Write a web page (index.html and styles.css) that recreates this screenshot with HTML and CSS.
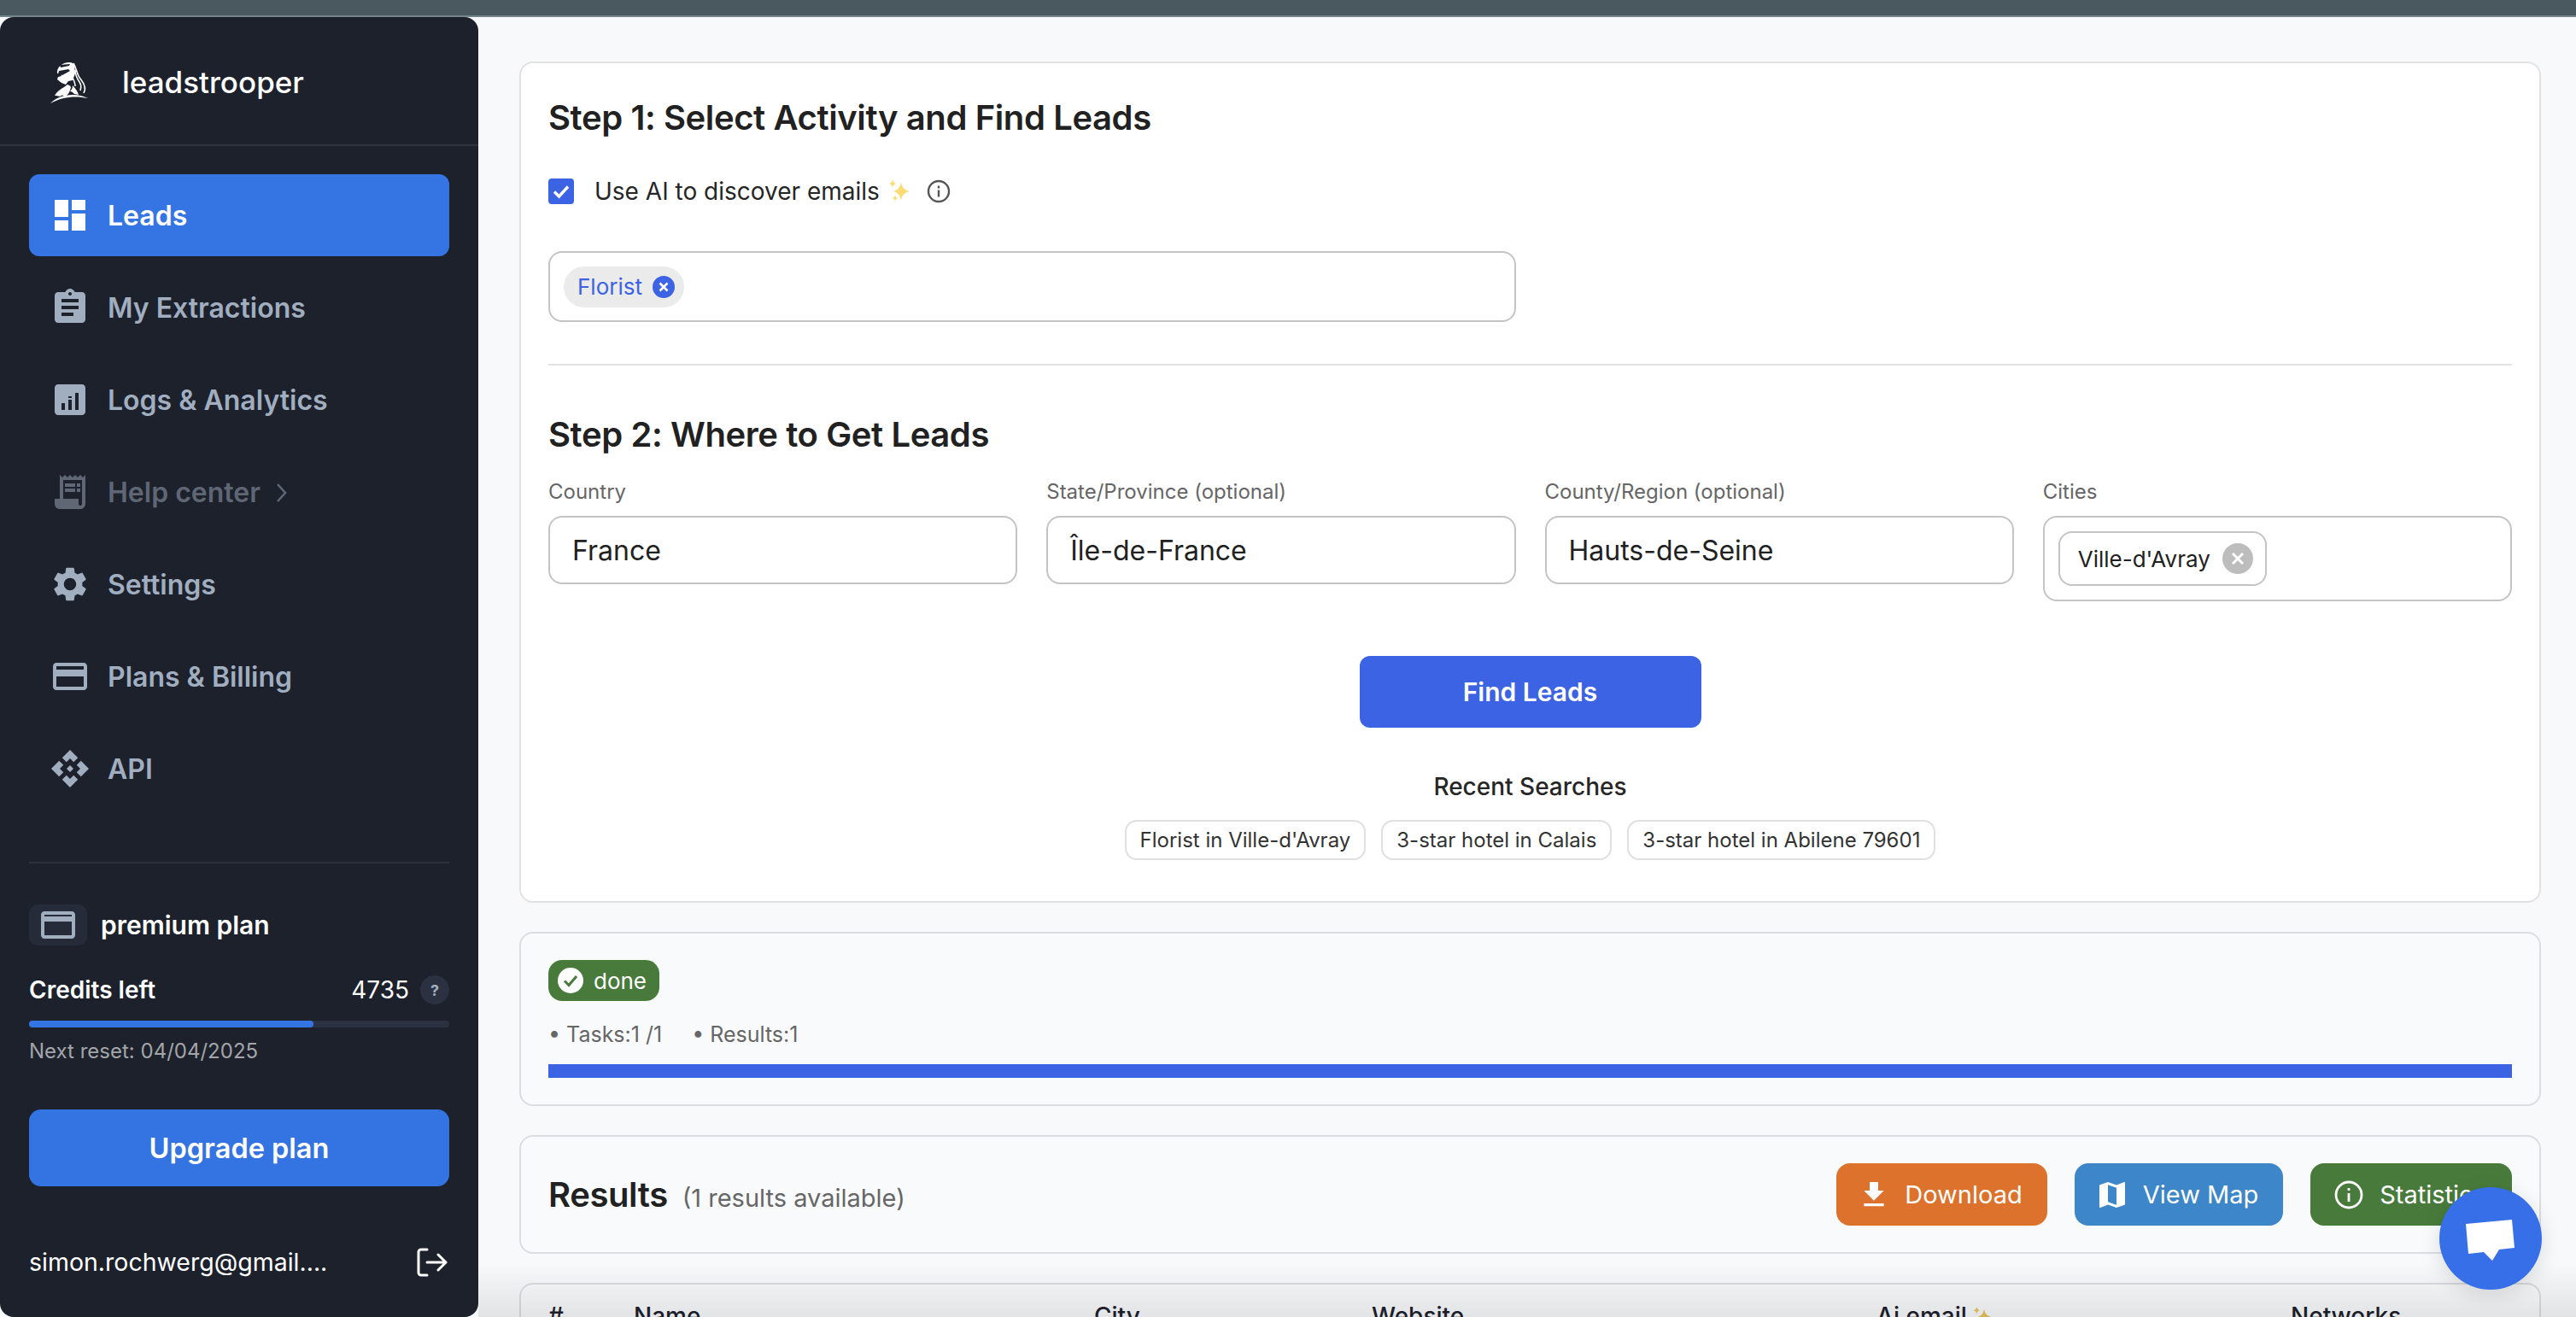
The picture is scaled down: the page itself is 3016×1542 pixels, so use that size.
FILE: index.html
```html
<!DOCTYPE html>
<html lang="en">
<head>
  <meta charset="UTF-8" />
  <title>leadstrooper</title>
  <link rel="stylesheet" href="styles.css">
</head>
<body>
  <div class="topbar"></div>

  <div class="app">
    <aside class="sidebar">
      <div class="brand">
        <svg class="logo" viewBox="0 0 60 70" width="60" height="70">
          <path fill="#fff" d="M17 24c-1-7 6-13 14-13 3 0 5 1 6 3l1 10-3 8-5 1-3 4-5-2-5-4 1-3 4-1-1-2z"/>
          <path fill="#1c212c" d="M19 21l11-2 2 2-9 5-5-1zM20 14l12-1-1 2-10 2z"/>
          <path fill="none" stroke="#fff" stroke-width="1.6" d="M36 12c3 5 4 11 6 15s6 7 7 12c1 3 0 6-1 8M38 20c0 6 3 11 5 14s2 7 1 10M35 29c2 4 3 6 3 10"/>
          <path fill="#fff" d="M14 50c3-6 10-9 15-13 2 1 3 1 4 3-1 5-3 9-7 11-2-2-4-2-6 0-2-1-4-1-6-1zM35 38c3 3 6 7 7 11l-5-1c-2-2-3-3-5-3 2-2 3-4 3-7z"/>
          <path fill="#fff" d="M9 59c8-9 28-14 44-6-14-3-30-2-44 6z"/>
        </svg>
        <span class="brand-name">leadstrooper</span>
      </div>

      <nav class="nav">
        <a class="nav-item active">
          <svg viewBox="0 0 24 24"><path d="M3 13h8V3H3v10zm0 8h8v-6H3v6zm10 0h8V11h-8v10zm0-18v6h8V3h-8z"/></svg>
          Leads
        </a>
        <a class="nav-item">
          <svg viewBox="0 0 24 24"><path d="M19 3h-4.18C14.4 1.84 13.3 1 12 1c-1.3 0-2.4.84-2.82 2H5c-1.1 0-2 .9-2 2v14c0 1.1.9 2 2 2h14c1.1 0 2-.9 2-2V5c0-1.1-.9-2-2-2zm-7 0c.55 0 1 .45 1 1s-.45 1-1 1-1-.45-1-1 .45-1 1-1zm2 14H7v-2h7v2zm3-4H7v-2h10v2zm0-4H7V7h10v2z"/></svg>
          My Extractions
        </a>
        <a class="nav-item">
          <svg viewBox="0 0 24 24"><path d="M19 3H5c-1.1 0-2 .9-2 2v14c0 1.1.9 2 2 2h14c1.1 0 2-.9 2-2V5c0-1.1-.9-2-2-2zM9 18H7v-4h2v4zm4 0h-2v-6h2v6zm0-7h-2v-1h2v1zm4 7h-2V8h2v10z"/></svg>
          Logs &amp; Analytics
        </a>
        <a class="nav-item muted">
          <svg viewBox="0 0 24 24"><path d="M19.5 3.5 18 2l-1.5 1.5L15 2l-1.5 1.5L12 2l-1.5 1.5L9 2 7.5 3.5 6 2v14H3v3c0 1.66 1.34 3 3 3h12c1.66 0 3-1.34 3-3V2l-1.5 1.5zM19 19c0 .55-.45 1-1 1s-1-.45-1-1v-3H8V5h11v14z"/><path d="M9 7h6v2H9zm7 0h2v2h-2zm-7 3h6v2H9zm7 0h2v2h-2z"/></svg>
          Help center
          <svg class="chevron" viewBox="0 0 14 24"><path d="M2 2l9 10-9 10" fill="none" stroke="currentColor" stroke-width="2.6"/></svg>
        </a>
        <a class="nav-item">
          <svg viewBox="0 0 24 24"><path d="M19.14 12.94c.04-.3.06-.61.06-.94 0-.32-.02-.64-.07-.94l2.03-1.58c.18-.14.23-.41.12-.61l-1.92-3.32c-.12-.22-.37-.29-.59-.22l-2.39.96c-.5-.38-1.03-.7-1.62-.94l-.36-2.54c-.04-.24-.24-.41-.48-.41h-3.84c-.24 0-.43.17-.47.41l-.36 2.54c-.59.24-1.13.57-1.62.94l-2.39-.96c-.22-.08-.47 0-.59.22L2.74 8.87c-.12.21-.08.47.12.61l2.03 1.58c-.05.3-.09.63-.09.94s.02.64.07.94l-2.03 1.58c-.18.14-.23.41-.12.61l1.92 3.32c.12.22.37.29.59.22l2.39-.96c.5.38 1.03.7 1.62.94l.36 2.54c.05.24.24.41.48.41h3.84c.24 0 .44-.17.47-.41l.36-2.54c.59-.24 1.13-.56 1.62-.94l2.39.96c.22.08.47 0 .59-.22l1.92-3.32c.12-.22.07-.47-.12-.61l-2.01-1.58zM12 15.6c-1.98 0-3.6-1.62-3.6-3.6s1.62-3.6 3.6-3.6 3.6 1.62 3.6 3.6-1.62 3.6-3.6 3.6z"/></svg>
          Settings
        </a>
        <a class="nav-item">
          <svg viewBox="0 0 24 24"><path d="M20 4H4c-1.11 0-1.99.89-1.99 2L2 18c0 1.11.89 2 2 2h16c1.11 0 2-.89 2-2V6c0-1.11-.89-2-2-2zm0 14H4v-6h16v6zm0-10H4V6h16v2z"/></svg>
          Plans &amp; Billing
        </a>
        <a class="nav-item">
          <svg viewBox="0 0 24 24"><path d="M14 12l-2 2-2-2 2-2 2 2zm-2-6l2.12 2.12 2.5-2.5L12 1 7.38 5.62l2.5 2.5L12 6zm-6 6l2.12-2.12-2.5-2.5L1 12l4.62 4.62 2.5-2.5L6 12zm12 0l-2.12 2.12 2.5 2.5L23 12l-4.62-4.62-2.5 2.5L18 12zm-6 6l-2.12-2.12-2.5 2.5L12 23l4.62-4.62-2.5-2.5L12 18z"/></svg>
          API
        </a>
      </nav>

      <div class="side-bottom">
        <div class="plan">
          <span class="plan-icon">
            <svg viewBox="0 0 24 24"><path d="M20 4H4c-1.11 0-1.99.89-1.99 2L2 18c0 1.11.89 2 2 2h16c1.11 0 2-.89 2-2V6c0-1.11-.89-2-2-2zm0 14H4v-8h16v8zm0-11H4V6h16v1z"/></svg>
          </span>
          premium plan
        </div>
        <div class="credits">
          <span class="credits-label">Credits left</span>
          <span class="credits-num">4735</span>
          <span class="help-dot">?</span>
        </div>
        <div class="credit-bar"><div class="credit-fill" style="width: 67.7%"></div></div>
        <div class="reset">Next reset: 04/04/2025</div>
        <button class="upgrade">Upgrade plan</button>
        <div class="account">
          <span>simon.rochwerg@gmail....</span>
          <svg viewBox="0 0 36 34" width="36" height="34" fill="none" stroke="#fff" stroke-width="3" stroke-linecap="round" stroke-linejoin="round"><path d="M12 2H5a3 3 0 0 0-3 3v24a3 3 0 0 0 3 3h7M12 17h22M25 8l9 9-9 9"/></svg>
        </div>
      </div>
    </aside>

    <main class="main">
      <section class="card search-card">
        <h2>Step 1: Select Activity and Find Leads</h2>
        <div class="ai-row">
          <span class="checkbox">
            <svg viewBox="0 0 30 30" width="30" height="30"><path d="M7 15.5l5.5 5.5L23 9.5" fill="none" stroke="#fff" stroke-width="3.4"/></svg>
          </span>
          <span>Use AI to discover emails</span>
          <svg class="sparkle" viewBox="0 0 30 30" width="30" height="30" fill="#fbdb72"><path d="M15 4c1 6 3 9 10 11-7 2-9 5-10 11-1-6-3-9-9-11 6-2 8-5 9-11z"/><path d="M5 1c.5 3 1.500 4 4 5-2.500 1-3.500 2-4 5-.5-3-1.500-4-4-5 2.500-1 3.500-2 4-5z"/><path d="M8 19c.4 2.500 1 3.300 3.500 4-2.500.7-3.100 1.500-3.500 4-.4-2.500-1-3.300-3.500-4 2.500-.7 3.100-1.500 3.500-4z"/></svg>
          <svg class="info" viewBox="0 0 28 28" width="28" height="28" fill="none" stroke="#555" stroke-width="2.4"><circle cx="14" cy="14" r="12"/><path d="M14 12.500v8"/><path d="M14 7.500v3"/></svg>
        </div>

        <div class="activity-box">
          <span class="tag">Florist
            <svg viewBox="0 0 26 26" width="26" height="26"><circle cx="13" cy="13" r="13" fill="#3b63e4"/><path d="M8.500 8.500l9 9M17.500 8.500l-9 9" stroke="#fff" stroke-width="2.600"/></svg>
          </span>
        </div>

        <hr class="divider">

        <h2 class="step2">Step 2: Where to Get Leads</h2>
        <div class="fields">
          <div>
            <div class="field-label">Country</div>
            <div class="field-box">France</div>
          </div>
          <div>
            <div class="field-label">State/Province (optional)</div>
            <div class="field-box">Île-de-France</div>
          </div>
          <div>
            <div class="field-label">County/Region (optional)</div>
            <div class="field-box">Hauts-de-Seine</div>
          </div>
          <div>
            <div class="field-label">Cities</div>
            <div class="field-box cities">
              <span class="city-chip">Ville-d'Avray
                <svg viewBox="0 0 36 36" width="36" height="36"><circle cx="18" cy="18" r="18" fill="#bdbdbd"/><path d="M12 12l12 12M24 12L12 24" stroke="#fff" stroke-width="3"/></svg>
              </span>
            </div>
          </div>
        </div>

        <button class="find-btn">Find Leads</button>

        <div class="recent-title">Recent Searches</div>
        <div class="recent-list">
          <span class="recent-chip">Florist in Ville-d'Avray</span>
          <span class="recent-chip">3-star hotel in Calais</span>
          <span class="recent-chip">3-star hotel in Abilene 79601</span>
        </div>
      </section>

      <section class="card flat status-card">
        <span class="badge">
          <svg viewBox="0 0 30 30" width="30" height="30"><circle cx="15" cy="15" r="15" fill="#fff"/><path d="M8 15.500l5 5 9-10.500" fill="none" stroke="#487b3b" stroke-width="3"/></svg>
          done
        </span>
        <div class="stats">
          <span>• Tasks:1 /1</span>
          <span>• Results:1</span>
        </div>
        <div class="progress"></div>
      </section>

      <section class="card flat results-card">
        <div class="results-title">
          <strong>Results</strong>
          <span>(1 results available)</span>
        </div>
        <div class="actions">
          <button class="action orange">
            <svg viewBox="0 0 24 24" width="40" height="40"><path d="M5 20h14v-2H5v2zM19 9h-4V3H9v6H5l7 7 7-7z"/></svg>
            Download
          </button>
          <button class="action blue">
            <svg viewBox="0 0 24 24" width="40" height="40"><path d="M20.500 3l-.16.03L15 5.100 9 3 3.360 4.900c-.21.07-.36.25-.36.48V20.500c0 .28.22.5.5.5l.16-.03L9 18.900l6 2.100 5.640-1.900c.21-.07.36-.25.36-.48V3.500c0-.28-.22-.5-.5-.5zM15 19l-6-2.100V5l6 2.100V19z"/></svg>
            View Map
          </button>
          <button class="action green">
            <svg viewBox="0 0 34 34" width="34" height="34" fill="none" stroke="#fff" stroke-width="2.800"><circle cx="17" cy="17" r="15"/><path d="M17 15v10M17 9v3"/></svg>
            Statistics
          </button>
        </div>
      </section>

      <section class="card flat table-card">
        <table class="results-table">
          <thead>
            <tr>
              <th class="col-num">#</th>
              <th class="col-name">Name</th>
              <th class="col-city">City</th>
              <th class="col-web">Website</th>
              <th class="col-mail">Ai email
                <svg class="mail-sparkle" viewBox="0 0 30 30" width="26" height="26" fill="#e8c35a"><path d="M15 4c1 6 3 9 10 11-7 2-9 5-10 11-1-6-3-9-9-11 6-2 8-5 9-11z"/><path d="M5 1c.5 3 1.500 4 4 5-2.500 1-3.500 2-4 5-.5-3-1.500-4-4-5 2.500-1 3.500-2 4-5z"/></svg>
              </th>
              <th>Networks</th>
            </tr>
          </thead>
        </table>
      </section>

      <div class="bottom-shade"></div>
      <button class="chat-btn">
        <svg viewBox="0 0 120 120" width="120" height="120"><path fill="#fff" d="M31 43l54-5 3 33-18 2-8 13-10-10-18 2z"/></svg>
      </button>
    </main>
  </div>
</body>
</html>
```

FILE: styles.css
```css
* {
  box-sizing: border-box;
}

html, body {
  height: 100%;
  margin: 0;
  overflow: hidden;
}

body {
  font-family: Inter, "Liberation Sans", sans-serif;
  background: #f8f9fb;
  color: #212121;
  display: flex;
  flex-direction: column;
}

svg {
  flex-shrink: 0;
}

button {
  font-family: inherit;
  border: none;
  cursor: pointer;
}

.topbar {
  height: 20px;
  flex-shrink: 0;
  background: #4a5860;
  border-bottom: 2px solid #76848b;
}

.app {
  flex: 1;
  display: flex;
  min-height: 0;
}

/* sidebar */
.sidebar {
  width: 560px;
  flex-shrink: 0;
  background: #1c212c;
  border-radius: 16px;
  display: flex;
  flex-direction: column;
  color: #fff;
}

.brand {
  height: 151px;
  flex-shrink: 0;
  border-bottom: 2px solid #2f343f;
  display: flex;
  align-items: center;
  padding-left: 50px;
  padding-top: 4px;
  gap: 33px;
}

.brand-name {
  font-size: 35px;
  font-weight: 500;
  padding-bottom: 2px;
}

.nav {
  padding: 33px 34px 0;
  display: flex;
  flex-direction: column;
  gap: 12px;
}

.nav-item {
  height: 96px;
  border-radius: 12px;
  padding-left: 24px;
  display: flex;
  align-items: center;
  font-size: 32px;
  font-weight: 600;
  color: #a0aec0;
}

.nav-item svg {
  width: 48px;
  height: 48px;
  margin-right: 20px;
  fill: currentColor;
}

.nav-item svg.chevron {
  width: 14px;
  height: 24px;
  margin: 2px 0 0 18px;
  fill: none;
}

.nav-item.active {
  background: #3574e3;
  color: #fff;
}

.nav-item.muted {
  color: #5f6674;
}

.side-bottom {
  margin: 61px 34px 0;
  border-top: 2px solid #2a303c;
  padding-top: 48px;
}

.plan {
  display: flex;
  align-items: center;
  gap: 16px;
  font-size: 30px;
  font-weight: 600;
}

.plan-icon {
  width: 68px;
  height: 48px;
  border-radius: 10px;
  background: #252b38;
  display: flex;
  align-items: center;
  justify-content: center;
}

.plan-icon svg {
  width: 54px;
  height: 48px;
  fill: #a0aec0;
}

.credits {
  display: flex;
  align-items: center;
  margin-top: 34px;
  height: 36px;
  font-size: 28px;
}

.credits-label {
  font-weight: 600;
  flex: 1;
}

.help-dot {
  width: 34px;
  height: 34px;
  margin-left: 13px;
  border-radius: 50%;
  background: #2b3140;
  color: #a0aec0;
  font-size: 18px;
  font-weight: 700;
  display: flex;
  align-items: center;
  justify-content: center;
}

.credit-bar {
  height: 8px;
  margin-top: 18px;
  border-radius: 4px;
  background: #2b3140;
}

.credit-fill {
  height: 100%;
  border-radius: 4px;
  background: #3574e3;
}

.reset {
  margin-top: 12px;
  font-size: 24px;
  line-height: 32px;
  color: #a3a5a9;
}

.upgrade {
  display: block;
  width: 100%;
  height: 90px;
  margin-top: 52px;
  border-radius: 14px;
  background: #3474e2;
  color: #fff;
  font-size: 32.5px;
  font-weight: 600;
}

.account {
  display: flex;
  align-items: center;
  justify-content: space-between;
  margin-top: 71px;
  font-size: 28.5px;
  padding-right: 2px;
}

/* main column */
.main {
  flex: 1;
  min-width: 0;
  position: relative;
  overflow: hidden;
  padding: 52px 41px 0 48px;
  display: flex;
  flex-direction: column;
  gap: 34px;
}

.card {
  flex-shrink: 0;
  background: #fff;
  border: 2px solid #e2e2e2;
  border-radius: 16px;
  padding: 0 32px;
}

.card.flat {
  background: #f9fafc;
  border-color: #dcdde0;
}

h2 {
  margin: 0;
  font-size: 40px;
  line-height: 48px;
  font-weight: 600;
  letter-spacing: -0.4px;
}

.search-card {
  padding-top: 40px;
  padding-bottom: 48px;
}

.ai-row {
  display: flex;
  align-items: center;
  height: 30px;
  margin-top: 47px;
  font-size: 28px;
  color: #262626;
}

.checkbox {
  width: 30px;
  height: 30px;
  border-radius: 4px;
  background: #3b63e4;
  margin-right: 24px;
}

.checkbox svg {
  display: block;
}

.sparkle {
  margin-left: 10px;
}

.info {
  margin-left: 15px;
}

.activity-box {
  width: 1133px;
  height: 83px;
  margin-top: 55px;
  border: 2px solid #c4c4c4;
  border-radius: 16px;
  padding-left: 16px;
  display: flex;
  align-items: center;
}

.tag {
  height: 48px;
  padding: 0 11px 0 16px;
  border-radius: 24px;
  background: #ebebeb;
  color: #3b63e4;
  font-size: 26px;
  display: flex;
  align-items: center;
  gap: 12px;
}

.divider {
  height: 2px;
  margin: 49px 0 0;
  border: none;
  background: #e2e2e2;
}

.step2 {
  margin-top: 57px;
}

.fields {
  display: grid;
  grid-template-columns: repeat(4, 1fr);
  gap: 34px;
  align-items: start;
  margin-top: 28px;
}

.field-label {
  font-size: 24px;
  line-height: 30px;
  color: #666;
  margin-bottom: 13px;
}

.field-box {
  height: 80px;
  border: 2px solid #c4c4c4;
  border-radius: 16px;
  padding-left: 26px;
  font-size: 32px;
  display: flex;
  align-items: center;
}

.field-box.cities {
  height: 100px;
  padding-left: 16px;
}

.city-chip {
  height: 64px;
  padding: 0 14px 0 21px;
  border: 2px solid #c4c4c4;
  border-radius: 16px;
  font-size: 26px;
  display: flex;
  align-items: center;
  gap: 14px;
}

.find-btn {
  display: block;
  width: 400px;
  height: 84px;
  margin: 64px auto 0;
  border-radius: 12px;
  background: #3b63e4;
  color: #fff;
  font-size: 30px;
  font-weight: 600;
}

.recent-title {
  margin-top: 49px;
  text-align: center;
  font-size: 28px;
  line-height: 40px;
  font-weight: 500;
  color: #262626;
}

.recent-list {
  display: flex;
  justify-content: center;
  gap: 18px;
  margin-top: 19px;
}

.recent-chip {
  height: 47px;
  padding: 0 16px;
  border: 2px solid #e0e0e0;
  border-radius: 14px;
  font-size: 24px;
  color: #333;
  display: flex;
  align-items: center;
}

.status-card {
  padding-top: 31px;
  padding-bottom: 31px;
}

.badge {
  width: 130px;
  height: 48px;
  border-radius: 16px;
  background: #487b3b;
  color: #fff;
  font-size: 26px;
  padding-left: 11px;
  display: flex;
  align-items: center;
  gap: 12px;
}

.stats {
  display: flex;
  gap: 35px;
  margin-top: 21px;
  font-size: 25px;
  line-height: 36px;
  color: #666;
}

.progress {
  height: 16px;
  margin-top: 17px;
  background: #3b63e4;
}

.results-card {
  height: 139px;
  display: flex;
  align-items: center;
  justify-content: space-between;
}

.results-title {
  display: flex;
  align-items: baseline;
  gap: 17px;
}

.results-title strong {
  font-size: 40px;
  font-weight: 600;
  letter-spacing: -0.4px;
}

.results-title span {
  font-size: 29px;
  color: #666;
}

.actions {
  display: flex;
  gap: 32px;
}

.action {
  height: 73px;
  border-radius: 16px;
  color: #fff;
  font-size: 29px;
  display: flex;
  align-items: center;
  gap: 16px;
  padding: 0 29px 0 24px;
}

.action svg {
  fill: #fff;
}

.action.green {
  gap: 19px;
  padding: 0 30px 0 28px;
}

.action.green svg {
  fill: none;
}

.orange {
  background: #dd722c;
}

.blue {
  background: #3c86c9;
}

.green {
  background: #487b3b;
}

.table-card {
  background: #f3f4f6;
  height: 80px;
  padding-top: 20px;
}

.results-table {
  width: 100%;
  border-collapse: collapse;
  table-layout: fixed;
}

.results-table th {
  padding: 0;
  text-align: left;
  font-size: 28px;
  font-weight: 500;
  color: #1c212c;
  white-space: nowrap;
}

.mail-sparkle {
  vertical-align: -4px;
}

.col-num {
  width: 100px;
}

.col-name {
  width: 539px;
}

.col-city {
  width: 325px;
}

.col-web {
  width: 591px;
}

.col-mail {
  width: 485px;
}

.bottom-shade {
  position: absolute;
  left: 0;
  right: 0;
  bottom: 0;
  height: 64px;
  background: linear-gradient(rgba(0, 0, 0, 0), rgba(0, 0, 0, 0.09));
}

.chat-btn {
  position: absolute;
  right: 40px;
  top: 1370px;
  width: 120px;
  height: 120px;
  padding: 0;
  border-radius: 50%;
  background: #376fe8;
  box-shadow: 0 6px 24px rgba(0, 0, 0, 0.12);
}

.chat-btn svg {
  display: block;
}
```
